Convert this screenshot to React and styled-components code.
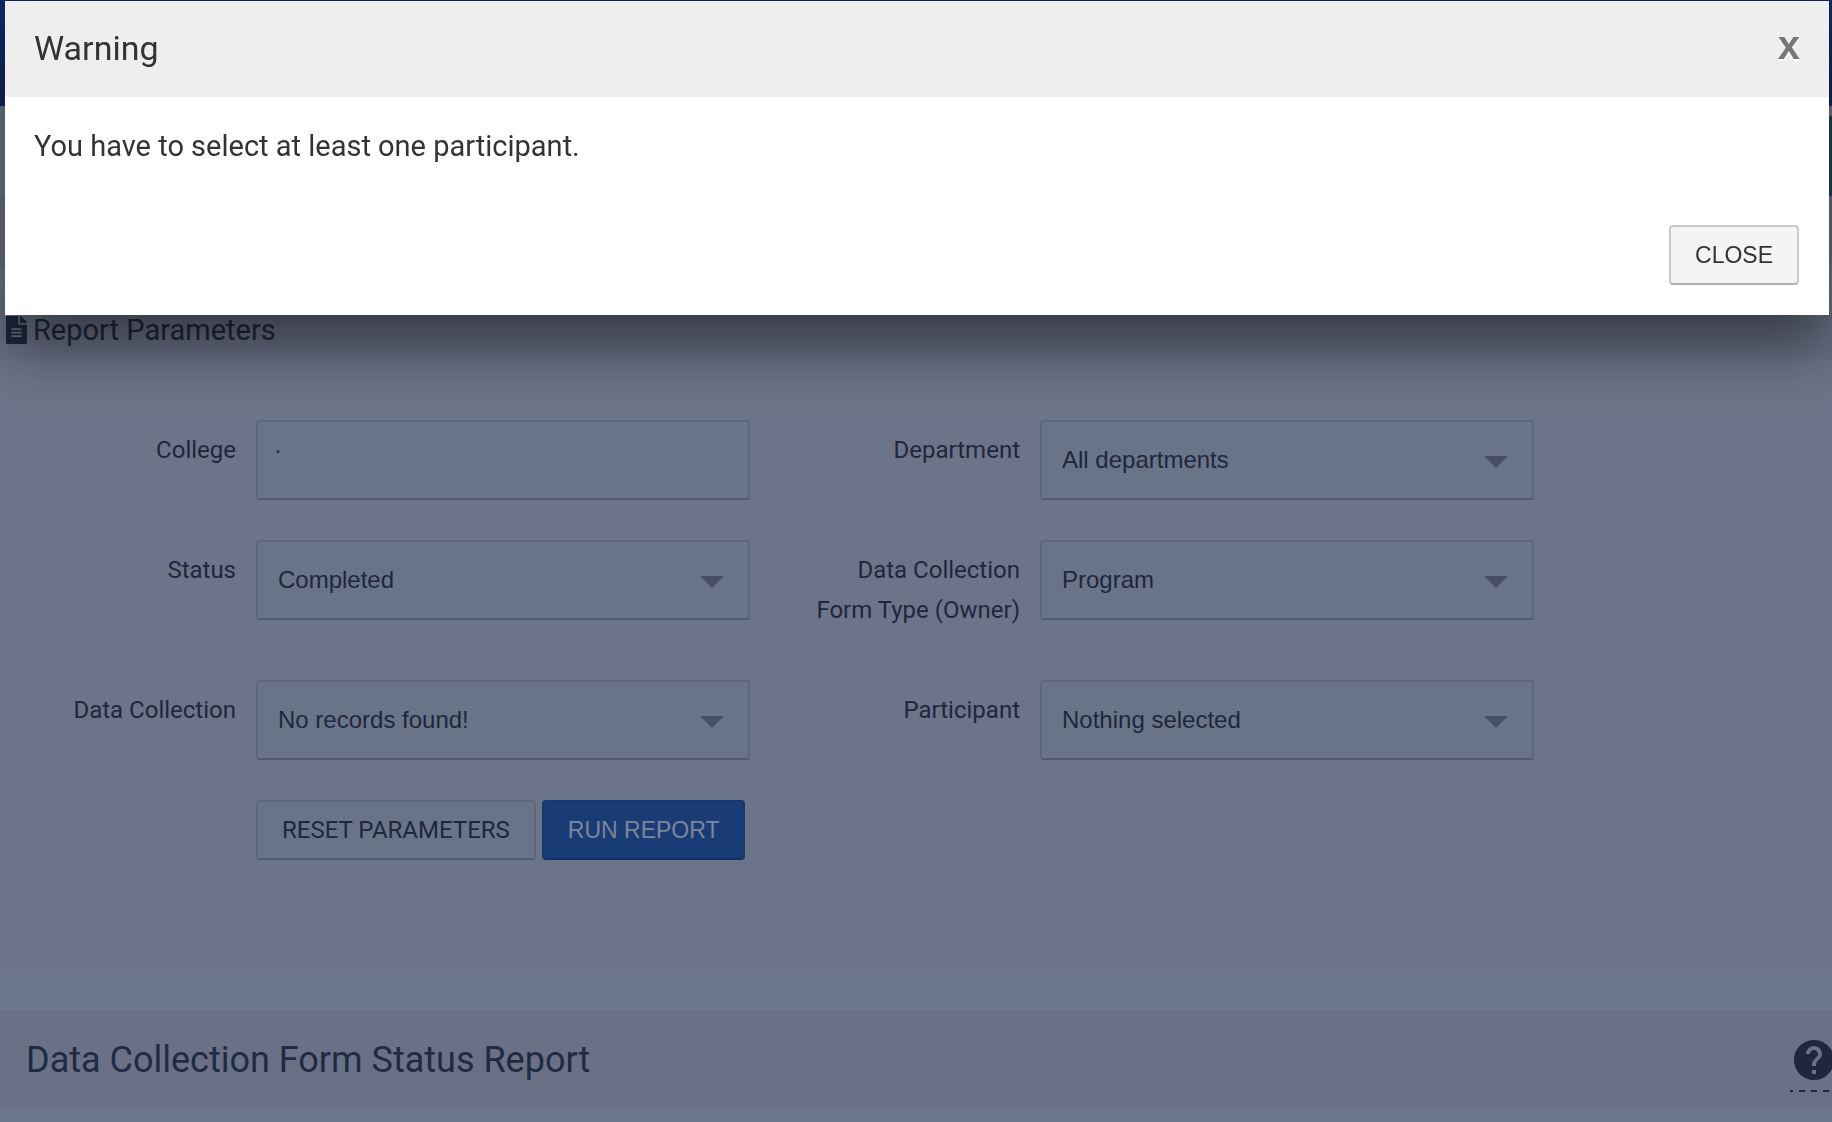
import React, {useState}                from 'react'
import styled, {createGlobalStyle} from 'styled-components'
import {FaFileAlt}                 from 'react-icons/fa'
import {MdHelp}                    from 'react-icons/md'

const ink = '#1e273c'
const sans = '"Liberation Sans", Arial, sans-serif'

const filters = [
    {id: 'department', label: 'Department', value: 'All departments'},
    {id: 'status', label: 'Status', value: 'Completed'},
    {id: 'owner', label: 'Data Collection Form Type (Owner)', value: 'Program'},
    {id: 'collection', label: 'Data Collection', value: 'No records found!'},
    {id: 'participant', label: 'Participant', value: 'Nothing selected'}
]

const GlobalStyle = createGlobalStyle`
    * {
        box-sizing: border-box;
    }
    body {
        margin: 0;
        min-height: 100vh;
        overflow: hidden;
        background-color: #6d788c;
        color: ${ink};
        font-family: Roboto, sans-serif;
        font-size: 24px;
        line-height: 40px;
    }
`

const NavBar = styled.header`
    height: 106px;
    background-color: #122765;
`

const SubBar = styled.div`
    display: flex;
    justify-content: flex-end;
    align-items: flex-end;
    height: 90px;
    background-color: #6d788c;
`

const Badge = styled.div`
    width: 80px;
    height: 80px;
    background-color: #1d4658;
`

const Band = styled.div`
    height: 72px;
    margin-bottom: 30px;
    background-color: #6a7186;
`

const SectionHeader = styled.h2`
    display: flex;
    align-items: center;
    gap: 6px;
    margin: 0;
    padding: 12px 6px 10px;
    background-color: #6a7186;
    font-size: 29px;
    font-weight: 400;

    svg {
        width: 21px;
        height: 28px;
    }
`

const Form = styled.form`
    display: grid;
    grid-template-columns: 236fr 494fr 250fr 494fr 278fr;
    gap: 40px 20px;
    align-items: start;
    padding: 60px 0 110px;
    background-color: #6c7489;
`

const Label = styled.label`
    grid-column: ${({side}) => side === 'left' ? 1 : 3};
    padding: 10px 0 10px 40px;
    text-align: right;
`

const Control = styled.div`
    position: relative;
    grid-column: ${({side}) => side === 'left' ? 2 : 4};
`

const fieldStyle = `
    display: block;
    width: 100%;
    height: 80px;
    border: 2px solid #5d677b;
    border-bottom-color: #505a70;
    border-radius: 4px 0 0 4px;
    background-color: #6a7488;
    color: ${ink};
    font-family: ${sans};
    font-size: 24px;
`

const TextField = styled.input`
    ${fieldStyle}
    padding: 0 20px 20px 16px;
`

const Select = styled.select`
    ${fieldStyle}
    padding: 0 60px 2px 20px;
    appearance: none;
`

const Arrow = styled.svg`
    position: absolute;
    top: 36px;
    right: 26px;
    width: 24px;
    height: 12px;
    fill: #464f65;
    pointer-events: none;
`

const Actions = styled.div`
    display: flex;
    grid-column: 2 / 4;
    gap: 6px;
`

const Button = styled.button`
    height: 60px;
    padding: 0 24px;
    border: 2px solid #5d677b;
    border-bottom-color: #505a70;
    border-radius: 4px;
    background-color: #6a7488;
    color: ${ink};
    font-family: Roboto, sans-serif;
    font-size: 24px;
    white-space: nowrap;
`

const PrimaryButton = styled(Button)`
    border-color: #19376f;
    border-bottom-color: #152f63;
    background-color: #1a3c76;
    color: #7c869a;
    font-family: ${sans};
    font-size: 23px;
`

const CloseButton = styled(Button)`
    border-color: #c8c8c8;
    border-bottom-color: #b0b0b0;
    background-color: #f4f4f4;
    color: #333;
    font-family: ${sans};
    font-size: 23px;
`

const ReportHeader = styled.div`
    display: flex;
    align-items: center;
    justify-content: space-between;
    height: 98px;
    margin-top: 40px;
    padding-left: 26px;
    overflow: hidden;
    background-color: #6a7186;
`

const ReportTitle = styled.h1`
    margin: 0;
    padding-top: 2px;
    color: #202b42;
    font-size: 36px;
    font-weight: 400;
`

const HelpLink = styled.a`
    width: 42px;
    height: 56px;
    margin-top: 10px;
    background: repeating-linear-gradient(90deg, ${ink} 0 3px, transparent 3px 9px, ${ink} 9px 12px) bottom / 100% 2px no-repeat;
    color: ${ink};

    svg {
        display: block;
        width: 48px;
        height: 48px;
    }
`

const Modal = styled.div`
    position: fixed;
    top: 1px;
    left: 5px;
    right: 3px;
    background-color: #fff;
    box-shadow: 0 32px 56px rgba(0, 0, 0, .48);
    color: #333;
`

const ModalHeader = styled.div`
    display: flex;
    align-items: center;
    justify-content: space-between;
    height: 96px;
    padding: 0 29px 2px;
    background-color: #eee;
`

const ModalTitle = styled.h3`
    margin: 0;
    font-size: 34px;
    font-weight: 400;
`

const Dismiss = styled.button`
    padding: 0 0 6px;
    border: 0;
    background: none;
    color: #777;
    font-family: ${sans};
    font-size: 40px;
    font-weight: 700;
    line-height: 40px;
    text-shadow: 0 2px 0 #fff;
`

const ModalText = styled.p`
    margin: 0;
    padding: 29px 29px 59px;
    font-size: 29px;
`

const ModalFooter = styled.div`
    display: flex;
    justify-content: flex-end;
    padding: 0 30px 30px;
`

const Filter = ({id, label, value, side}) => (
    <>
        <Label htmlFor={id} side={side}>{label}</Label>
        <Control side={side}>
            <Select id={id} defaultValue={value}>
                <option>{value}</option>
            </Select>
            <Arrow viewBox="0 0 24 12" aria-hidden="true">
                <path d="M0,0 L24,0 L12,12Z"/>
            </Arrow>
        </Control>
    </>
)

export default function App() {
    const [isOpen, setOpen] = useState(true)
    const close = () => setOpen(false)

    return (
        <>
            <GlobalStyle/>
            <NavBar/>
            <SubBar><Badge/></SubBar>
            <Band/>
            <SectionHeader><FaFileAlt/>Report Parameters</SectionHeader>
            <Form onSubmit={e => e.preventDefault()}>
                <Label htmlFor="college" side="left">College</Label>
                <Control side="left">
                    <TextField id="college" type="text" defaultValue="·"/>
                </Control>
                {filters.map((filter, i) => (
                    <Filter key={filter.id} side={i % 2 ? 'left' : 'right'} {...filter}/>
                ))}
                <Actions>
                    <Button type="reset">RESET PARAMETERS</Button>
                    <PrimaryButton type="submit">RUN REPORT</PrimaryButton>
                </Actions>
            </Form>
            <ReportHeader>
                <ReportTitle>Data Collection Form Status Report</ReportTitle>
                <HelpLink href="#help" aria-label="Help"><MdHelp/></HelpLink>
            </ReportHeader>
            {isOpen && (
                <Modal role="dialog" aria-labelledby="modal-title">
                    <ModalHeader>
                        <ModalTitle id="modal-title">Warning</ModalTitle>
                        <Dismiss type="button" onClick={close}>x</Dismiss>
                    </ModalHeader>
                    <ModalText>You have to select at least one participant.</ModalText>
                    <ModalFooter>
                        <CloseButton type="button" onClick={close}>CLOSE</CloseButton>
                    </ModalFooter>
                </Modal>
            )}
        </>
    )
}
